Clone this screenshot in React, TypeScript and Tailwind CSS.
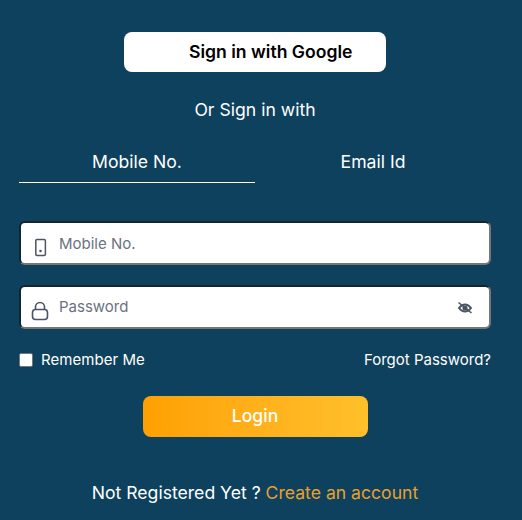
export default function App() {
  return (
    <div className="w-[522px] h-[520px] overflow-hidden bg-[#0e415d] font-['Inter',sans-serif] text-white flex flex-col pt-8 pl-[19px] pr-[31px]">
      <button className="self-center w-[262px] h-10 rounded-lg bg-white text-black text-[17.6px] font-semibold pl-[65px] text-left leading-10">
        Sign in with Google
      </button>
      <div className="mt-[26px] text-center text-[17.6px] leading-6">Or Sign in with</div>
      <div className="mt-[28px] flex w-[472px] text-[17.6px]">
        <div className="w-[236px] h-[33px] border-b border-white text-center leading-6">Mobile No.</div>
        <div className="w-[236px] h-[33px] text-center leading-6">Email Id</div>
      </div>
      <div className="mt-[38px] flex h-11 w-[472px] items-center rounded-md bg-white border-2 border-t-[#14252f] border-l-[#14252f] border-r-[#767676] border-b-[#767676]">
        <svg className="ml-[12px] mt-[7px] text-[#4b5563]" width="16" height="20" viewBox="0 0 16 20" fill="none" stroke="currentColor" strokeWidth="1.5">
          <rect x="2.8" y="2.5" width="9.6" height="16" rx="1.2" />
          <circle cx="7.500" cy="14" r="1.300" fill="currentColor" stroke="none" />
        </svg>
        <span className="ml-[10px] mt-[2px] text-[15px] text-[#6b7280]">Mobile No.</span>
      </div>
      <div className="mt-5 flex h-11 w-[472px] items-center rounded-md bg-white border-2 border-t-[#14252f] border-l-[#14252f] border-r-[#767676] border-b-[#767676]">
        <svg className="ml-[10px] mt-[8px] text-[#4b5563]" width="18" height="20" viewBox="0 0 18 20" fill="none" stroke="currentColor" strokeWidth="1.6">
          <rect x="1.5" y="8.5" width="15" height="10" rx="3" />
          <path d="M4.500 8.500V6a4.500 4.500 0 0 1 9 0v2.500" />
        </svg>
        <span className="ml-[10px] text-[15px] text-[#6b7280]">Password</span>
        <svg className="ml-auto mr-[16px] mt-[2px] text-[#4b5563]" width="16" height="14" viewBox="0 0 16 14" fill="none" stroke="currentColor" strokeWidth="2">
          <path d="M2 7c1.800-2.400 3.800-3.600 6-3.600S12.200 4.600 14 7c-1.800 2.400-3.800 3.600-6 3.600S3.800 9.400 2 7z" />
          <circle cx="8" cy="7" r="1.600" fill="currentColor" />
          <path d="M1.500 1.500l13 10.500" strokeWidth="1.600" />
        </svg>
      </div>
      <div className="mt-[21px] flex w-[472px] items-center justify-between text-[15px] leading-5">
        <label className="flex items-center">
          <span className="block w-[14px] h-[14px] rounded-[2px] bg-white border border-[#767676]" />
          <span className="ml-2 tracking-[0.05px]">Remember Me</span>
        </label>
        <span>Forgot Password?</span>
      </div>
      <button className="mt-[26px] self-center w-[225px] h-[41px] rounded-lg bg-gradient-to-r from-[#ffa000] to-[#ffc02a] text-[17.6px] font-medium text-white">
        Login
      </button>
      <div className="mt-[44px] text-center text-[17.6px] leading-6">
        Not Registered Yet ? <span className="text-[#e8a02f]">Create an account</span>
      </div>
    </div>
  );
}
